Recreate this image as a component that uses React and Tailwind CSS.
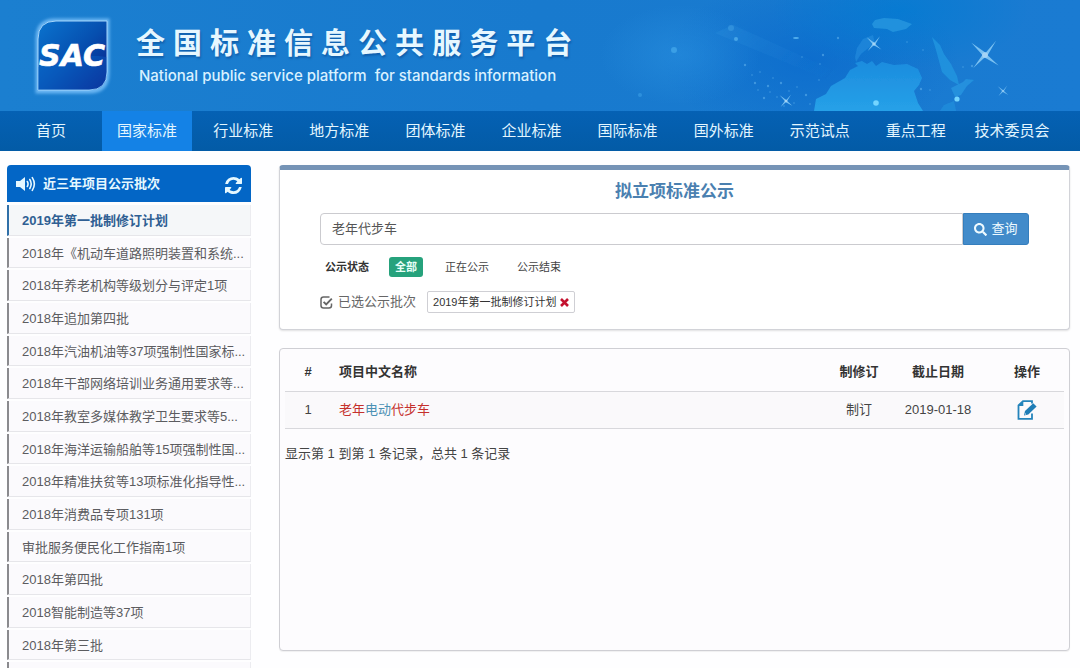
import React, { useState } from 'react';
import { FaSearch } from 'react-icons/fa';

const NAV_ITEMS = [
  '首页', '国家标准', '行业标准', '地方标准', '团体标准', '企业标准',
  '国际标准', '国外标准', '示范试点', '重点工程', '技术委员会',
];

const BATCHES = [
  '2019年第一批制修订计划',
  '2018年《机动车道路照明装置和系统...',
  '2018年养老机构等级划分与评定1项',
  '2018年追加第四批',
  '2018年汽油机油等37项强制性国家标...',
  '2018年干部网络培训业务通用要求等...',
  '2018年教室多媒体教学卫生要求等5...',
  '2018年海洋运输船舶等15项强制性国...',
  '2018年精准扶贫等13项标准化指导性...',
  '2018年消费品专项131项',
  '审批服务便民化工作指南1项',
  '2018年第四批',
  '2018智能制造等37项',
  '2018年第三批',
  '',
];

const STATUSES = ['全部', '正在公示', '公示结束'];

const TITLE = '全国标准信息公共服务平台';

function SacLogo() {
  return (
    <svg className="h-[92px] w-[92px] shrink-0" viewBox="0 0 92 92" role="img" aria-label="SAC">
      <defs>
        <linearGradient id="sacFill" x1="0" y1="0" x2="1" y2="1">
          <stop offset="0" stopColor="#0a74cf" />
          <stop offset="0.5" stopColor="#0650b0" />
          <stop offset="1" stopColor="#0a1c86" />
        </linearGradient>
        <filter id="sacGlow" x="-20%" y="-20%" width="140%" height="140%">
          <feGaussianBlur stdDeviation="1.8" />
        </filter>
      </defs>
      <path d="M29 10H82V63Q82 82 63 82H11V29Q11 10 29 10Z" fill="#6ab6f3" stroke="#6ab6f3" strokeWidth="3" filter="url(#sacGlow)" />
      <path d="M30 11H81V62Q81 80 63 80H12V29Q12 11 30 11Z" fill="url(#sacFill)" stroke="#a5d6fb" strokeWidth="1" />
      <path d="M12 57Q46 42 81 47V62Q81 80 63 80H12Z" fill="#0d6fd8" opacity="0.3" />
      <text x="46" y="56" textAnchor="middle" fill="#fff" stroke="#fff" strokeWidth="0.6" fontSize="30" fontWeight="700" fontStyle="italic" fontFamily="'DejaVu Sans', sans-serif">SAC</text>
    </svg>
  );
}

function Sparkle({ x, y, r, opacity = 0.8 }) {
  return (
    <g transform={`translate(${x} ${y}) scale(${r})`} opacity={opacity}>
      <path d="M-1.05 -.95L.05 -.17L.85 -1.1L.2 .02L1.05 .8L-.03 .19L-.9 1L-.2 0Z" fill="#93d3fa" />
      <circle r="0.22" fill="#c8ebff" />
    </g>
  );
}

function HeaderArt() {
  const dots = [
    [745, 65], [752, 75], [760, 72], [768, 86], [758, 90], [773, 78], [781, 83], [789, 91], [777, 97],
    [764, 98], [797, 87], [794, 103], [806, 95], [820, 64], [819, 80], [823, 55], [802, 57], [770, 92],
    [838, 38], [907, 42], [923, 50], [921, 89], [930, 90], [963, 67], [972, 66], [810, 104], [784, 106], [755, 83],
  ];
  return (
    <svg className="absolute right-0 top-0 h-full w-[480px]" viewBox="600 0 480 111" aria-hidden="true">
      <defs>
        <radialGradient id="haze">
          <stop offset="0" stopColor="#2a92e2" stopOpacity="0.5" />
          <stop offset="1" stopColor="#2a92e2" stopOpacity="0" />
        </radialGradient>
        <radialGradient id="deep">
          <stop offset="0" stopColor="#0868cc" stopOpacity="0.7" />
          <stop offset="1" stopColor="#0868cc" stopOpacity="0" />
        </radialGradient>
        <radialGradient id="sky">
          <stop offset="0" stopColor="#007bd2" stopOpacity="0.7" />
          <stop offset="1" stopColor="#007bd2" stopOpacity="0" />
        </radialGradient>
        <linearGradient id="land" x1="0" y1="0" x2="0" y2="1">
          <stop offset="0" stopColor="#1c8cde" />
          <stop offset="1" stopColor="#26a1e8" />
        </linearGradient>
        <linearGradient id="beam" x1="0" y1="0" x2="1" y2="0.4">
          <stop offset="0" stopColor="#3fa4e8" stopOpacity="0.15" />
          <stop offset="1" stopColor="#3fa4e8" stopOpacity="0" />
        </linearGradient>
        <filter id="soft">
          <feGaussianBlur stdDeviation="0.7" />
        </filter>
      </defs>
      <ellipse cx="810" cy="60" rx="150" ry="80" fill="url(#deep)" />
      <ellipse cx="900" cy="10" rx="130" ry="60" fill="url(#sky)" />
      <ellipse cx="680" cy="55" rx="80" ry="50" fill="url(#haze)" />
      <g filter="url(#soft)">
        <path d="M715 33L733 25L860 82L842 86Z" fill="url(#beam)" />
        <path d="M814 111L816 99L826 94L831 86L845 78L850 70L858 66L855 63L862 61L867 64L872 61L876 66L882 62L894 65L907 64L918 69L922 78L919 85L914 91L918 103L923 111Z" fill="url(#land)" />
        <path d="M855 57L857 48L863 39L873 35L875 43L866 50L861 54L856 62Z" fill="#2490e0" opacity="0.55" />
        <path d="M872 24L875 20L884 18L898 19L912 24L906 29L893 32L887 29L874 28Z" fill="#2597e0" opacity="0.8" />
        <path d="M932 37L940 45L944 54L951 64L957 76L959 85L950 80L942 72L939 61L936 50Z" fill="#239ae2" opacity="0.7" />
        <path d="M951 88L963 82L966 79L974 80L967 86L961 95L955 97Z" fill="#2698e2" opacity="0.7" />
        <path d="M944 105L954 101L956 111H940Z" fill="#2698e2" opacity="0.5" />
      </g>
      {dots.map(([x, y], i) => (
        <circle key={i} cx={x} cy={y} r={i % 3 === 0 ? 1.2 : 0.8} fill="#6bbcf2" opacity="0.5" />
      ))}
      <g filter="url(#soft)">
        <circle cx="674" cy="50" r="3" fill="#4bb0f0" opacity="0.6" />
        <circle cx="736" cy="39" r="2" fill="#58b5f0" opacity="0.7" />
        <circle cx="731" cy="28" r="3" fill="#3fa2e6" opacity="0.5" />
        <circle cx="640" cy="95" r="2" fill="#4bb0f0" opacity="0.4" />
      </g>
      <ellipse cx="796" cy="38" rx="3" ry="1" fill="#62bdf5" opacity="0.8" />
      <circle cx="876" cy="103" r="2.8" fill="#74d5ff" />
      <circle cx="957" cy="99" r="2.6" fill="#74d5ff" />
      <Sparkle x={985} y={55} r={13} />
      <Sparkle x={874} y={44} r={7} />
      <Sparkle x={786} y={101} r={6} />
      <Sparkle x={1003} y={91} r={5} opacity={0.7} />
    </svg>
  );
}

function VolumeIcon() {
  return (
    <svg className="h-4 w-5" viewBox="0 0 20 16" fill="none" stroke="currentColor" strokeWidth="1.6" strokeLinecap="round" aria-hidden="true">
      <path d="M0 5H4L9 1V15L4 11H0Z" fill="currentColor" stroke="none" />
      <path d="M11.3 5.5Q12.8 8 11.3 10.5M13.8 3.5Q16.6 8 13.8 12.5M16.3 1.6Q20.4 8 16.3 14.4" />
    </svg>
  );
}

function RefreshIcon() {
  return (
    <svg className="h-[17px] w-[17px]" viewBox="0 0 1536 1536" fill="currentColor" aria-hidden="true">
      <path d="M1511 928q0 5-1 7-64 268-268 434.500t-478 166.500q-146 0-282.500-55t-243.500-157l-129 129q-19 19-45 19t-45-19-19-45v-448q0-26 19-45t45-19h448q26 0 45 19t19 45-19 45l-137 137q71 66 161 102t187 36q134 0 250-65t186-179q11-17 53-117 8-23 30-23h192q13 0 22.500 9.500t9.500 22.500zM1536 128v448q0 26-19 45t-45 19h-448q-26 0-45-19t-19-45 19-45l138-138q-148-137-349-137-134 0-250 65t-186 179q-11 17-53 117-8 23-30 23h-199q-13 0-22.500-9.500t-9.500-22.500v-7q65-268 270-434.500t480-166.500q146 0 284 55.500t245 156.500l130-129q19-19 45-19t45 19 19 45z" />
    </svg>
  );
}

function CheckIcon() {
  return (
    <svg className="h-[13px] w-[13px]" viewBox="0 0 13 13" fill="none" stroke="currentColor" aria-hidden="true">
      <path d="M9.500 1H3.500Q1 1 1 3.500V9.500Q1 12 3.500 12H9Q11.500 12 11.500 9.500V7.500" strokeWidth="1.500" />
      <path d="M3.600 5.800L6.200 8.400L11.800 2.600" strokeWidth="1.900" />
    </svg>
  );
}

function EditIcon() {
  return (
    <svg className="h-5 w-5" viewBox="0 0 20 20" fill="none" aria-hidden="true">
      <path d="M15 3.500V1.200H6L1.500 5.500V18.800H15V13.500" stroke="#2484bb" strokeWidth="1.800" />
      <path d="M6.300 1V6H1Z" fill="#2484bb" />
      <path d="M7 15.500L8 11L16.200 3.200L19.600 6.400L11.300 14.400Z" fill="#1f7db6" />
      <path d="M8 13.600L9 14.500" stroke="#fff" strokeWidth="0.900" />
    </svg>
  );
}

function Header({ active, setActive }) {
  return (
    <header className="shrink-0">
      <div className="relative flex h-[111px] items-center overflow-hidden bg-linear-to-r from-[#1b7fd0] via-[#187ace] to-[#1a7bd2] pl-[26px]">
        <HeaderArt />
        <div className="relative flex items-center gap-[18px]">
          <SacLogo />
          <div>
            <h1 className="flex gap-2 text-[29px] leading-9 font-bold text-[#e6f7ff] [text-shadow:1px_2px_2px_rgba(0,50,120,0.4)]">
              {TITLE.split('').map((char, i) => <span key={i}>{char}</span>)}
            </h1>
            <p className="mt-1 pl-[3px] font-['Inter','Liberation_Sans',sans-serif] text-[15px] leading-5 font-medium whitespace-pre text-[#d9f1ff]">National public service platform  for standards information</p>
          </div>
        </div>
      </div>
      <nav className="grid h-10 grid-cols-11 bg-linear-to-b from-[#0561b4] to-[#035ba6] pr-5 pl-[3px]">
        {NAV_ITEMS.map((item) => (
          <a
            key={item}
            href="#"
            onClick={() => setActive(item)}
            className={`mx-[3px] flex items-center justify-center text-[15px] whitespace-nowrap text-[#e3f6ff] ${active === item ? 'bg-[#1482e6]' : ''}`}
          >
            {item}
          </a>
        ))}
      </nav>
    </header>
  );
}

function Sidebar({ selected, setSelected }) {
  return (
    <aside className="w-[244px] shrink-0">
      <div className="flex h-[37px] items-center rounded-t-[4px] bg-[#0366c6] pr-[9px] pl-[9px] text-[#e6f8ff]">
        <VolumeIcon />
        <h2 className="ml-[7px] flex-1 text-[13px] font-bold">近三年项目公示批次</h2>
        <button type="button" aria-label="刷新" className="mt-1"><RefreshIcon /></button>
      </div>
      <ul className="mt-[3px] grid min-h-[490px] auto-rows-fr">
        {BATCHES.map((name, i) => (
          <li key={i} className="pb-[2px]">
            <a
              href="#"
              onClick={() => setSelected(name)}
              className={`flex h-full items-center overflow-hidden border-r border-b border-l-2 border-r-[#ececf0] border-b-[#e6e6ea] pt-[2px] pl-[13px] text-[13px] whitespace-nowrap ${selected === name ? 'border-l-[#2f6fa8] bg-[#f5f7f9] font-bold text-[#2f5f93]' : 'border-l-[#8a8a8e] bg-[#fbfafd] text-[#5c5c60]'}`}
            >
              {name}
            </a>
          </li>
        ))}
      </ul>
    </aside>
  );
}

function SearchPanel({ batch, clearBatch }) {
  const [keyword, setKeyword] = useState('老年代步车');
  const [status, setStatus] = useState('全部');

  return (
    <section className="rounded-[4px] border border-t-[5px] border-[#d2d3d8] border-t-[#7593b6] bg-white px-10 pt-[10px] pb-4 shadow-[0_1px_2px_rgba(0,0,0,0.12)]">
      <h2 className="text-center text-[17px] leading-6 font-bold text-[#4a80b0]">拟立项标准公示</h2>
      <form className="mt-[9px] flex h-8" onSubmit={(e) => e.preventDefault()}>
        <input
          aria-label="关键词"
          value={keyword}
          onChange={(e) => setKeyword(e.target.value)}
          className="min-w-0 flex-1 rounded-l-[4px] border border-[#cbcbcf] bg-white px-[11px] text-[13px] text-[#555] outline-none"
        />
        <button type="submit" className="flex w-[66px] items-center justify-center gap-1 rounded-r-[3px] border border-[#357ebd] bg-[#428bca] text-[13px] text-[#eefaff]">
          <FaSearch className="h-[13px] w-[13px]" />
          查询
        </button>
      </form>
      <div className="mt-3 flex h-5 items-center gap-4 pl-[5px] text-[11px]">
        <span className="mr-1 font-bold text-[#333]">公示状态</span>
        {STATUSES.map((item) => (
          <button
            key={item}
            type="button"
            onClick={() => setStatus(item)}
            className={`h-5 rounded-[3px] px-[6px] ${status === item ? 'bg-[#26a27c] font-bold text-[#e8fff8]' : 'text-[#444]'}`}
          >
            {item}
          </button>
        ))}
      </div>
      <div className="mt-[14px] flex h-[22px] items-center">
        <span className="flex items-center gap-[5px] text-[13px] text-[#666]">
          <CheckIcon />
          已选公示批次
        </span>
        {batch && (
          <span className="ml-[11px] flex h-[22px] items-center gap-[3px] rounded-[2px] border border-[#cfcfd4] px-[5px] text-[11px] text-[#333]">
            {batch}
            <button type="button" aria-label="移除" onClick={clearBatch}>
              <svg className="h-[9px] w-[9px]" viewBox="0 0 9 9" stroke="#c4122f" strokeWidth="2.600" aria-hidden="true">
                <path d="M1 1L8 8M8 1L1 8" />
              </svg>
            </button>
          </span>
        )}
      </div>
    </section>
  );
}

function ResultsPanel() {
  return (
    <section className="min-h-[303px] rounded-[4px] border border-[#cfcfd4] bg-[#fdfcfe] px-[5px] pt-1 shadow-[0_1px_1px_rgba(0,0,0,0.06)]">
      <table className="w-full table-fixed text-center text-[13px] text-[#444]">
        <thead>
          <tr className="h-[38px] border-b border-[#d8d8dc] text-[#333]">
            <th className="w-[46px] font-bold">#</th>
            <th className="pl-2 text-left font-bold">项目中文名称</th>
            <th className="w-[54px] font-bold">制修订</th>
            <th className="w-[104px] font-bold">截止日期</th>
            <th className="w-[74px] font-bold">操作</th>
          </tr>
        </thead>
        <tbody>
          <tr className="h-[37px] border-b border-[#d8d8dc] bg-[#faf9fb]">
            <td>1</td>
            <td className="pl-2 text-left">
              <a href="#" className="text-[#4b90b4]">
                <span className="text-[#c5302c]">老年</span>电动<span className="text-[#c5302c]">代步车</span>
              </a>
            </td>
            <td>制订</td>
            <td>2019-01-18</td>
            <td>
              <button type="button" aria-label="编辑" className="mx-auto block"><EditIcon /></button>
            </td>
          </tr>
        </tbody>
      </table>
      <p className="mt-[15px] text-[13px] leading-5 text-[#444]">显示第 1 到第 1 条记录，总共 1 条记录</p>
    </section>
  );
}

export default function App() {
  const [activeNav, setActiveNav] = useState('国家标准');
  const [batch, setBatch] = useState(BATCHES[0]);

  return (
    <div className="flex h-screen flex-col overflow-hidden bg-[#fefeff] font-['Liberation_Sans','Noto_Sans_CJK_SC',sans-serif]" lang="zh-CN">
      <Header active={activeNav} setActive={setActiveNav} />
      <div className="flex items-start gap-7 pt-[14px] pr-[10px] pl-[7px]">
        <Sidebar selected={batch} setSelected={setBatch} />
        <main className="flex min-w-0 flex-1 flex-col gap-[18px]">
          <SearchPanel batch={batch} clearBatch={() => setBatch('')} />
          <ResultsPanel />
        </main>
      </div>
    </div>
  );
}
